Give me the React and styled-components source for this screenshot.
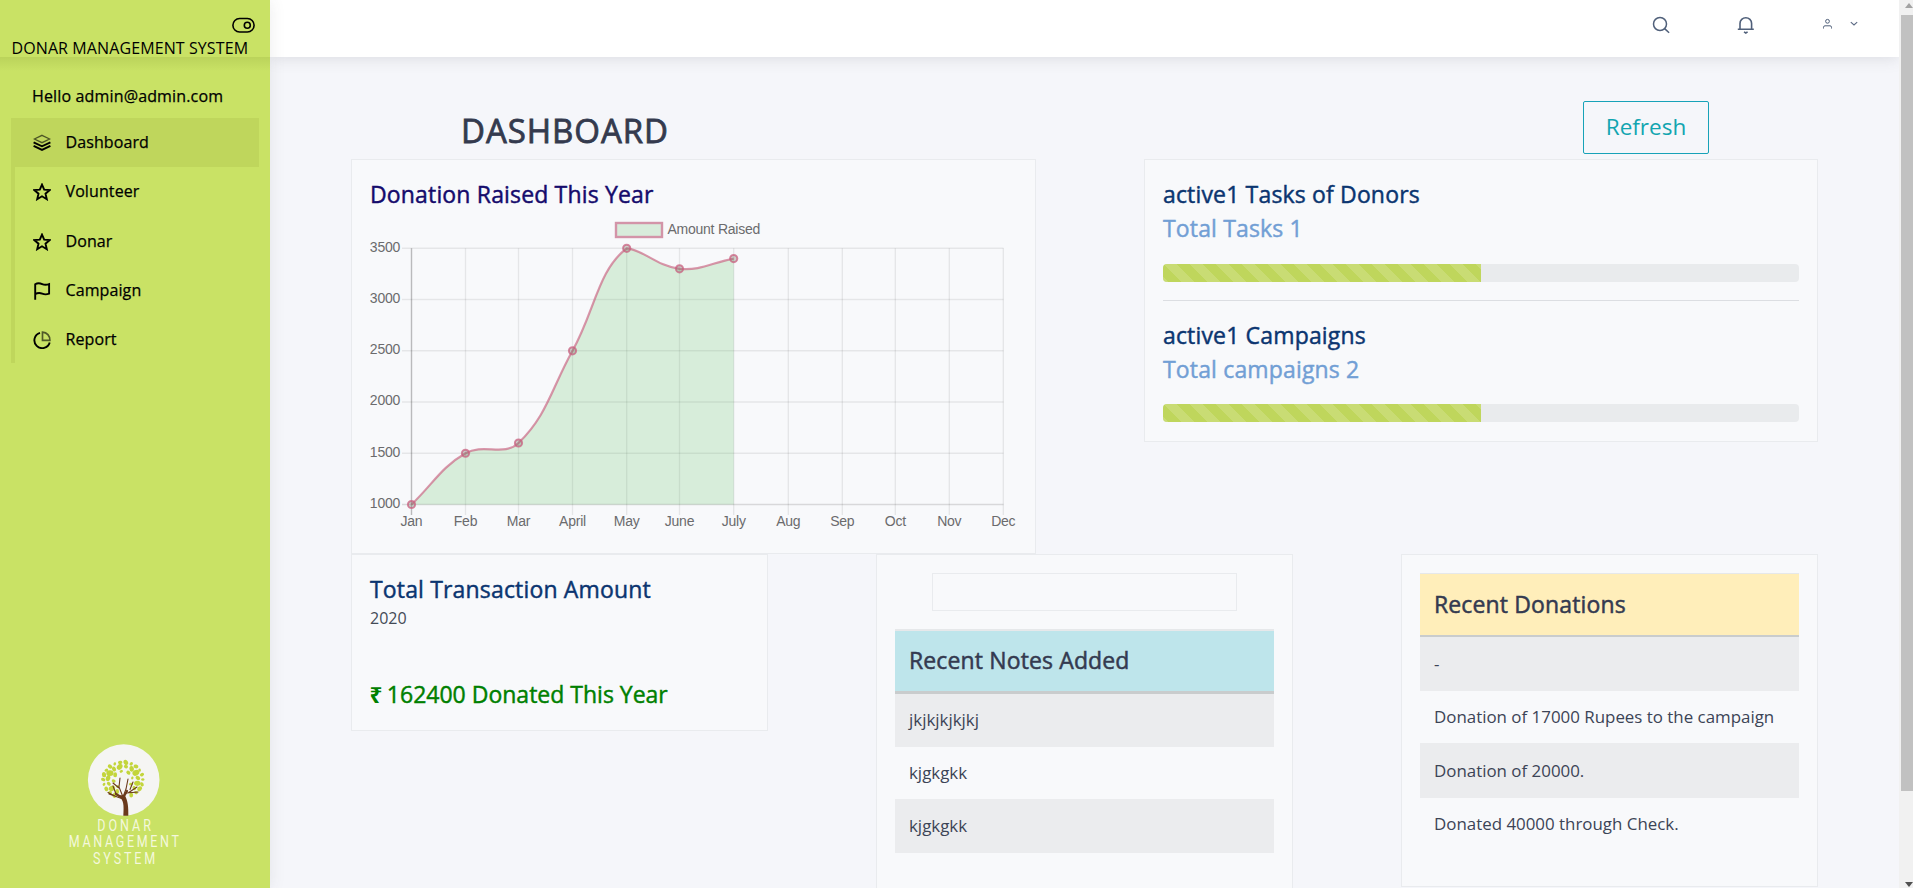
import React from "react";
import styled, { createGlobalStyle } from "styled-components";

const GlobalStyle = createGlobalStyle`
  *, *::before, *::after { box-sizing: border-box; }
  html, body { margin: 0; height: 100%; overflow: hidden; }
  body { font-family: "Open Sans", "Noto Sans", sans-serif; color: #364a63; background: #f5f6fa; }
  svg { display: block; flex: none; }
`;

const Shell = styled.div`
  display: grid;
  grid-template-columns: 270px 1629px 14px;
  grid-template-rows: 888px;
  height: 888px;
  overflow: hidden;
`;

/* ---------- sidebar ---------- */
const Sidebar = styled.aside`
  display: flex;
  flex-direction: column;
  background: #c9e265;
  color: #000;
  box-shadow: 0 1px 15px rgba(69, 65, 78, 0.1);
  z-index: 1;
`;

const Brand = styled.div`
  height: 57px;
  padding: 17px 15px 0 11.5px;
  display: flex;
  flex-direction: column;
  gap: 4px;
  font-size: 16px;
  line-height: 22px;
  letter-spacing: 0.1px;
  white-space: nowrap;
  svg { align-self: flex-end; }
`;

const BrandShade = styled.div`
  height: 14px;
  background: linear-gradient(rgba(60, 80, 0, 0.1), rgba(60, 80, 0, 0));
`;

const Greeting = styled.div`
  padding-left: 32px;
  height: 47px;
  line-height: 51px;
  font-size: 16px;
  letter-spacing: 0.15px;
  -webkit-text-stroke: 0.25px currentColor;
`;

const Menu = styled.nav`
  margin: 0 11px;
  border-left: 4px solid #bfd65c;
`;

const MenuItem = styled.a`
  display: flex;
  align-items: center;
  gap: 14.5px;
  height: 49px;
  padding: 0 0 ${(p) => (p.$lift ? 2 : 0)}px 18px;
  font-size: 16px;
  letter-spacing: 0.1px;
  -webkit-text-stroke: 0.25px currentColor;
  background: ${(p) => (p.$active ? "#bfd65c" : "transparent")};
  svg { margin-top: 3px; }
`;

const MenuText = styled.span`
  line-height: 48px;
`;

const Logo = styled.div`
  margin-top: auto;
  height: 149px;
  padding-left: 63px;
`;

/* ---------- main area ---------- */
const Main = styled.main`
  display: flex;
  flex-direction: column;
  min-width: 0;
`;

const Topbar = styled.header`
  display: flex;
  align-items: flex-start;
  height: 57px;
  flex: none;
  background: #fff;
  box-shadow: 0 1px 15px rgba(69, 65, 78, 0.15);
  padding: 16px 41px 0 0;
  justify-content: flex-end;
`;

const TopIcon = styled.span`
  display: flex;
  margin-left: ${(p) => p.$gap || 0}px;
  margin-top: ${(p) => p.$drop || 0}px;
`;

const Content = styled.div`
  padding: 0 81px 0 81px;
`;

const PageHead = styled.div`
  display: flex;
  justify-content: space-between;
  height: 102px;
  padding: 44px 109px 0 110px;
`;

const PageTitle = styled.h1`
  margin: 9px 0 0;
  font-size: 33px;
  line-height: 42px;
  font-weight: 400;
  letter-spacing: 0.95px;
  -webkit-text-stroke: 0.8px currentColor;
  color: #343a4e;
`;

const RefreshButton = styled.button`
  width: 126px;
  height: 53px;
  padding: 0 0 2px;
  border: 1px solid #17a2b8;
  border-radius: 2px;
  background: transparent;
  color: #12a5b0;
  font: 400 22.5px/40px "Open Sans", sans-serif;
`;

const Row = styled.div`
  display: flex;
  justify-content: space-between;
  align-items: flex-start;
`;

const Card = styled.section`
  width: ${(p) => p.$w}px;
  height: ${(p) => p.$h}px;
  padding: 18px;
  border: 1px solid #e9ebee;
  background: #f8f9fb;
`;

const CardTitle = styled.h2`
  margin: 0;
  font-size: 23px;
  line-height: 33px;
  font-weight: 400;
  letter-spacing: ${(p) => (p.$tight ? 0 : 0.16)}px;
  -webkit-text-stroke: 0.45px currentColor;
  color: ${(p) => p.$color || "#0b3570"};
  white-space: nowrap;
`;

const CardSub = styled(CardTitle)`
  line-height: 34px;
  margin-bottom: ${(p) => p.$space || 19}px;
`;

const Bar = styled.div`
  height: 18px;
  border-radius: 4px;
  background: #e9ebed;
  overflow: hidden;
`;

const BarFill = styled.div`
  width: 50%;
  height: 100%;
  background-color: #bfd65c;
  background-image: linear-gradient(45deg, rgba(255,255,255,.15) 25%, transparent 25%, transparent 50%, rgba(255,255,255,.15) 50%, rgba(255,255,255,.15) 75%, transparent 75%, transparent);
  background-size: 26px 26px;
`;

const Divider = styled.hr`
  margin: 18px 0;
  border: 0;
  height: 1px;
  background: #dcdee2;
`;

const Year = styled.div`
  font-size: 16px;
  line-height: 24px;
  color: #444b56;
`;

const Total = styled(CardTitle)`
  margin-top: 48px;
`;

const Rupee = styled.span`
  font-weight: 700;
  font-size: 22.5px;
  -webkit-text-stroke: 0;
  margin: 0 -1.5px 0 -0.5px;
`;

const SearchBox = styled.div`
  width: 305px;
  height: 38px;
  margin: 0 auto 18px;
  border: 1px solid #e9ebee;
`;

const List = styled.div`
  border-top: ${(p) => p.$top}px solid #e6e8ea;
`;

const ListHead = styled.h2`
  margin: 0;
  height: ${(p) => p.$h}px;
  padding-left: 14px;
  border-bottom: ${(p) => p.$line}px solid #c9cccd;
  background: ${(p) => p.$bg};
  font-size: 23px;
  font-weight: 400;
  letter-spacing: 0.13px;
  -webkit-text-stroke: 0.5px currentColor;
  line-height: ${(p) => p.$lh}px;
  color: #343a50;
`;

const ListRow = styled.div`
  height: ${(p) => p.$h}px;
  padding-left: 14px;
  background: ${(p) => (p.$shaded ? "#ebecee" : "transparent")};
  font-size: 16.9px;
  line-height: ${(p) => p.$lh || 51}px;
  color: #3c4456;
  white-space: nowrap;
`;

/* ---------- scrollbar ---------- */
const Track = styled.div`
  display: flex;
  flex-direction: column;
  background: #f1f1f1;
  padding-left: 2px;
`;

const Thumb = styled.div`
  height: 776px;
  background: #c1c1c1;
`;

const ArrowUp = styled.div`
  height: 15px;
  padding: 3px 0 0 4px;
`;

const ArrowDown = styled.div`
  margin-top: auto;
  height: 6px;
  padding-left: 4px;
`;

/* ---------- icons ---------- */
const Icon = ({ size = 18, box = 18, w = 2, children }) => (
  <svg width={size} height={size} viewBox={`0 0 ${box} ${box}`} fill="none" stroke="currentColor" strokeWidth={w}>
    {children}
  </svg>
);

const LayersIcon = () => (
  <Icon w={1.9}>
    <path d="M9 1.3 16.6 5 9 8.7 1.4 5Z" strokeWidth="1.3" opacity=".6" />
    <path d="M.6 8.3 9 12.3 17.4 8.3M.6 11.8 9 15.9 17.4 11.8" />
  </Icon>
);
const StarIcon = () => (
  <Icon w={1.9}>
    <path d="m9 1.6 2.2 5 5.6.5-4.3 3.6 1.3 5.5L9 13.3l-4.8 2.9 1.3-5.5-4.3-3.6 5.6-.5Z" />
  </Icon>
);
const FlagIcon = () => (
  <Icon w={1.9}>
    <path d="M2.2 17.7V2.3C4.7.7 7 1.1 9.2 2.1s4.3 1 6.900 0V11.7c-2.600 1-4.700.9-6.900 0s-4.300-1-7 .4" />
  </Icon>
);
const PieIcon = () => (
  <Icon w={1.9}>
    <path d="M7 1.8A7.8 7.8 0 1 0 16.7 11.4" />
    <path d="M9.5 1.1V9.4H16.9C17 5 14 1.300 9.500 1.100Z" opacity=".6" strokeWidth="1.7" />
  </Icon>
);

/* ---------- chart ---------- */
const months = ["Jan", "Feb", "Mar", "April", "May", "June", "July", "Aug", "Sep", "Oct", "Nov", "Dec"];
const xs = [411.5, 465.5, 518.5, 572.5, 626.7, 679.5, 733.7, 788.3, 842.3, 895.3, 949.3, 1003.3];
const ticks = [3500, 3000, 2500, 2000, 1500, 1000];
const values = [1000, 1500, 1600, 2500, 3500, 3300, 3400];
const TOP = 248.3;
const BOTTOM = 504.5;
const yOf = (v) => BOTTOM - ((v - 1000) / 2500) * (BOTTOM - TOP);

function curve() {
  const pts = values.map((v, i) => ({ x: xs[i], y: yOf(v) }));
  const clamp = (y) => Math.max(TOP, Math.min(BOTTOM, y));
  const ctrl = pts.map((p, i) => {
    const a = pts[i - 1] || p;
    const b = pts[i + 1] || p;
    const d1 = Math.hypot(p.x - a.x, p.y - a.y);
    const d2 = Math.hypot(b.x - p.x, b.y - p.y);
    const f1 = (0.4 * d1) / (d1 + d2);
    const f2 = (0.4 * d2) / (d1 + d2);
    return {
      px: p.x - f1 * (b.x - a.x), py: clamp(p.y - f1 * (b.y - a.y)),
      nx: p.x + f2 * (b.x - a.x), ny: clamp(p.y + f2 * (b.y - a.y)),
    };
  });
  let d = `M${pts[0].x} ${pts[0].y}`;
  for (let i = 1; i < pts.length; i++) {
    d += `C${ctrl[i - 1].nx} ${ctrl[i - 1].ny} ${ctrl[i].px} ${ctrl[i].py} ${pts[i].x} ${pts[i].y}`;
  }
  return { d, pts };
}

const ChartText = styled.text`
  font: 14px "Liberation Sans", Arial, sans-serif;
  letter-spacing: -0.25px;
  fill: #6b6b6d;
`;

function Chart() {
  const { d, pts } = curve();
  return (
    <svg width="647" height="325" viewBox="370 211 647 325">
      {ticks.map((t) => (
        <g key={t}>
          <line x1="402" x2="1003.5" y1={yOf(t)} y2={yOf(t)} stroke="#000" strokeOpacity={t === 1000 ? 0.13 : 0.075} strokeWidth="1.4" />
          <ChartText x="400" y={yOf(t) + 3.4} textAnchor="end">{t}</ChartText>
        </g>
      ))}
      {months.map((m, i) => (
        <g key={m}>
          <line x1={xs[i]} x2={xs[i]} y1={TOP} y2="515" stroke="#000" strokeOpacity={i === 0 ? 0.25 : 0.075} strokeWidth="1.4" />
          <ChartText x={xs[i]} y="526" textAnchor="middle">{m}</ChartText>
        </g>
      ))}
      <path d={`${d}V${BOTTOM}H${xs[0]}Z`} fill="rgba(76,185,80,.19)" />
      <path d={d} fill="none" stroke="#c96080" strokeOpacity=".65" strokeWidth="2.2" />
      {pts.map((p) => (
        <circle key={p.x} cx={p.x} cy={p.y} r="3.6" fill="rgba(110,110,90,.3)" stroke="#c96080" strokeOpacity=".75" strokeWidth="2" />
      ))}
      <rect x="616" y="223" width="46" height="14" fill="#d8ecdb" stroke="#d394a8" strokeWidth="2.4" />
      <ChartText x="667.5" y="234">Amount Raised</ChartText>
    </svg>
  );
}

/* ---------- logo ---------- */
function TreeLogo() {
  const leaves = [];
  [[19.8, 22, 2.5], [15, 15, 3.3], [9.5, 8, 2.3]].forEach(([r, n, s], ring) => {
    for (let i = 0; i < n; i++) {
      const a = (i / n) * Math.PI * 2 + ring * 0.3;
      const x = 60 + Math.cos(a) * r;
      const y = 40.5 + Math.sin(a) * r * 0.87;
      if (y > 48 && Math.abs(x - 61) < 6) continue;
      const k = s * (0.65 + ((i * 7 + ring * 3) % 5) * 0.11);
      leaves.push(
        <ellipse key={`${ring}-${i}`} cx={x} cy={y} rx={k} ry={k * 0.78} transform={`rotate(${(i * 67) % 180} ${x} ${y})`} />
      );
    }
  });
  return (
    <svg width="122" height="130" viewBox="0 0 122 130">
      <circle cx="60.7" cy="41" r="35.8" fill="#f5f5f3" />
      <g fill="#c3d53b">{leaves}</g>
      <g fill="none" stroke="#6b3a1c" strokeLinecap="round">
        <path d="M60 60 46 55M52 57 45 53.5M53 55 50 47M60 58 56 48 57 39M56 49 50 44M60 58 63 50 65 40M63.5 54 75 53M65 54 74 48M67 50.5 70 43" strokeWidth="1.1" />
        <path d="M59.5 59 53 55M60 59 64 52" strokeWidth="2.2" />
      </g>
      <path d="M55 56.5C61 61 61 66 60.3 76.8H65.3C65.5 69 65 61 61.5 56Z" fill="#6b3a1c" />
      <g fill="#f4f8dc" fontFamily="Roboto, sans-serif" fontSize="16.5" fontWeight="400">
        <text transform="translate(34.3 92) scale(.76 1)" textLength="70.5" lengthAdjust="spacing">DONAR</text>
        <text transform="translate(5.8 108.3) scale(.76 1)" textLength="145" lengthAdjust="spacing">MANAGEMENT</text>
        <text transform="translate(30 124.8) scale(.76 1)" textLength="82" lengthAdjust="spacing">SYSTEM</text>
      </g>
    </svg>
  );
}

const menu = [
  ["Dashboard", LayersIcon],
  ["Volunteer", StarIcon],
  ["Donar", StarIcon],
  ["Campaign", FlagIcon],
  ["Report", PieIcon],
];

export default function App() {
  return (
    <>
      <GlobalStyle />
      <Shell>
        <Sidebar>
          <Brand>
            <svg width="23" height="16" viewBox="0 0 23 16" fill="none" stroke="#000" strokeWidth="1.6">
              <rect x=".9" y="1.5" width="21.2" height="13.5" rx="6.7" />
              <circle cx="15.3" cy="8.3" r="3" />
            </svg>
            <span>DONAR MANAGEMENT SYSTEM</span>
          </Brand>
          <BrandShade />
          <Greeting>Hello admin@admin.com</Greeting>
          <Menu>
            {menu.map(([label, Glyph], i) => (
              <MenuItem key={label} $active={i === 0} $lift={i < 2}>
                <Glyph />
                <MenuText>{label}</MenuText>
              </MenuItem>
            ))}
          </Menu>
          <Logo>
            <TreeLogo />
          </Logo>
        </Sidebar>

        <Main>
          <Topbar>
            <TopIcon>
              <svg width="18" height="18" viewBox="0 0 18 18" fill="none" stroke="#50607a" strokeWidth="1.5">
                <circle cx="8" cy="8" r="6.5" />
                <path d="m12.6 12.6 4.5 4.1" />
              </svg>
            </TopIcon>
            <TopIcon $gap={67}>
              <svg width="18" height="18" viewBox="0 0 18 18" fill="none" stroke="#50607a" strokeWidth="1.6">
                <path d="M.8 13.2H16.8M3 13V7.5a5.8 5.8 0 0 1 11.6 0V13M7 15.900 8.800 17l1.800-1.100" />
              </svg>
            </TopIcon>
            <TopIcon $gap={67} $drop={2}>
              <svg width="11" height="11" viewBox="0 0 11 11" fill="none" stroke="#50607a">
                <circle cx="5.5" cy="3.3" r="1.9" />
                <path d="M1.5 10.5V9.3Q1.5 7.8 3 7.8H8Q9.5 7.8 9.5 9.3V10.5" />
              </svg>
            </TopIcon>
            <TopIcon $gap={17} $drop={5}>
              <svg width="8" height="6" viewBox="0 0 8 6" fill="none" stroke="#5c6a84" strokeWidth="1.1">
                <path d="M.8 1.2 4 4 7.2 1.2" />
              </svg>
            </TopIcon>
          </Topbar>

          <Content>
            <PageHead>
              <PageTitle>DASHBOARD</PageTitle>
              <RefreshButton>Refresh</RefreshButton>
            </PageHead>

            <Row>
              <Card $w={685} $h={395}>
                <CardTitle $color="#150b6c">Donation Raised This Year</CardTitle>
                <Chart />
              </Card>
              <Card $w={674} $h={283}>
                <CardTitle>active1 Tasks of Donors</CardTitle>
                <CardSub $color="#729fd5">Total Tasks 1</CardSub>
                <Bar><BarFill /></Bar>
                <Divider />
                <CardTitle>active1 Campaigns</CardTitle>
                <CardSub $color="#729fd5" $space={18}>Total campaigns 2</CardSub>
                <Bar><BarFill /></Bar>
              </Card>
            </Row>

            <Row>
              <Card $w={417} $h={177}>
                <CardTitle>Total Transaction Amount</CardTitle>
                <Year>2020</Year>
                <Total $color="#008000" $tight><Rupee>₹</Rupee> 162400 Donated This Year</Total>
              </Card>
              <Card $w={417} $h={380}>
                <SearchBox />
                <List $top={2}>
                  <ListHead $bg="#bee5eb" $h={63} $line={3} $lh={59}>Recent Notes Added</ListHead>
                  <ListRow $h={53} $shaded>jkjkjkjkjkj</ListRow>
                  <ListRow $h={52}>kjgkgkk</ListRow>
                  <ListRow $h={54} $lh={54} $shaded>kjgkgkk</ListRow>
                </List>
              </Card>
              <Card $w={417} $h={333}>
                <List $top={1}>
                  <ListHead $bg="#ffeeba" $h={63} $line={2} $lh={61}>Recent Donations</ListHead>
                  <ListRow $h={54} $lh={53} $shaded>-</ListRow>
                  <ListRow $h={52}>Donation of 17000 Rupees to the campaign</ListRow>
                  <ListRow $h={55} $lh={55} $shaded>Donation of 20000.</ListRow>
                  <ListRow $h={52}>Donated 40000 through Check.</ListRow>
                </List>
              </Card>
            </Row>
          </Content>
        </Main>

        <Track>
          <ArrowUp>
            <svg width="8" height="5" viewBox="0 0 8 5"><path d="M0 5 4 0 8 5Z" fill="#a3a3a3" /></svg>
          </ArrowUp>
          <Thumb />
          <ArrowDown>
            <svg width="8" height="5" viewBox="0 0 8 5"><path d="M0 0H8L4 5Z" fill="#505050" /></svg>
          </ArrowDown>
        </Track>
      </Shell>
    </>
  );
}
